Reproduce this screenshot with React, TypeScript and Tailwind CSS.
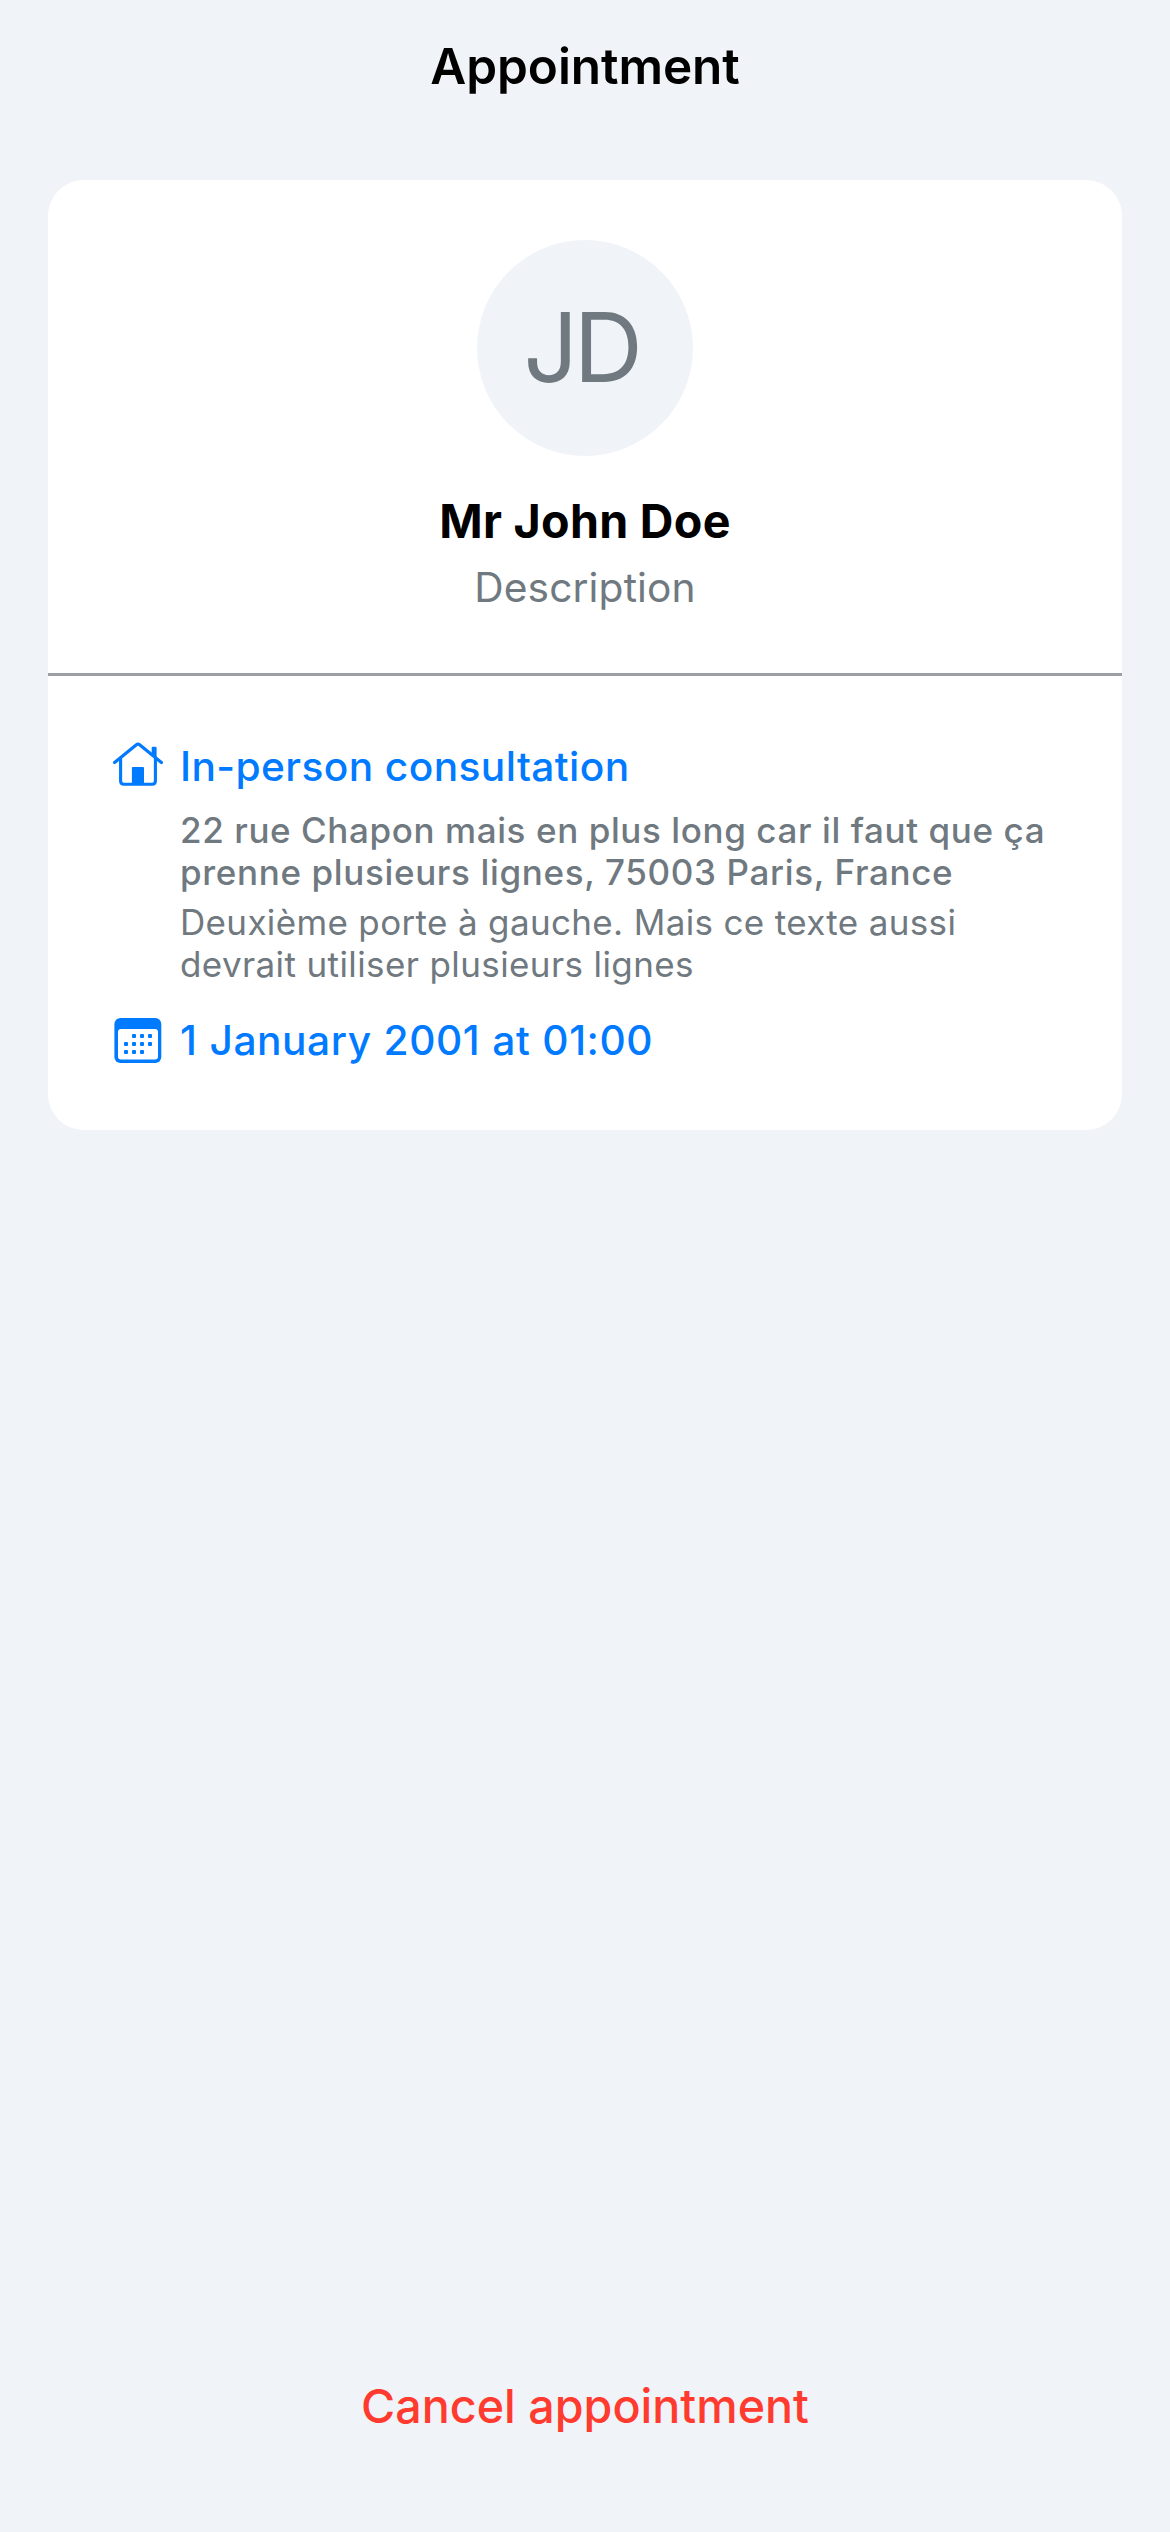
function HouseIcon() {
  return (
    <svg
      className="h-[49px] w-[74px] shrink-0"
      viewBox="6 22 74 49"
      fill="none"
      stroke="#007AFF"
      strokeLinecap="round"
      strokeLinejoin="round"
      aria-hidden="true"
    >
      <path d="M14.6 42.5 L36.4 24.7 Q38 23.5 39.6 24.7 L61.4 42.5" strokeWidth="3.2" />
      <path d="M20.6 38.5 V61 Q20.6 64.2 23.8 64.2 H52.2 Q55.4 64.2 55.4 61 V38.5" strokeWidth="3.1" />
      <path
        d="M51.7 35 V27.9 Q51.7 26.7 52.9 26.7 H55.4 Q56.6 26.7 56.6 27.9 V39 Z"
        fill="#007AFF"
        stroke="none"
      />
      <path d="M31.9 64 V48 Q31.9 47.1 32.8 47.1 H43.1 Q44 47.1 44 48 V64 Z" fill="#007AFF" stroke="none" />
    </svg>
  );
}

const calendarDots: [number, number][] = [
  [34, 36],
  [42, 36],
  [50, 36],
  [26, 44],
  [34, 44],
  [42, 44],
  [50, 44],
  [26, 52],
  [34, 52],
  [42, 52],
];

function CalendarIcon() {
  return (
    <svg className="h-[49px] w-[74px] shrink-0" viewBox="6 16 74 49" fill="#007AFF" aria-hidden="true">
      <rect x="14.4" y="17.9" width="46.9" height="45" rx="6" />
      <rect x="18" y="29" width="40" height="30.4" rx="3" fill="#fff" />
      {calendarDots.map(([x, y]) => (
        <rect key={`${x}-${y}`} x={x - 2} y={y - 2} width="4" height="4" rx="1" />
      ))}
    </svg>
  );
}

export default function App() {
  return (
    <div className="flex h-[2532px] w-[1170px] flex-col bg-[#F0F4F9] font-['Inter',sans-serif] text-black">
      <header className="pt-[36px] text-center">
        <h1 className="text-[49.5px] leading-[60px] font-semibold tracking-[-0.08px]">Appointment</h1>
      </header>

      <main className="mx-[48px] mt-[84px] h-[950px] rounded-[36px] bg-white">
        <section className="flex flex-col items-center border-b-[3px] border-[#9C9FA3] pt-[60px] pb-[61px]">
          <div className="flex size-[216px] items-center justify-center rounded-full bg-[#F0F4F9] pr-[8px] pb-[2px]">
            <span className="text-[95.7px] leading-[116px] tracking-[-4.3px] text-[#6F797F]">JD</span>
          </div>
          <h2 className="mt-[37px] text-[46.6px] leading-[56px] font-bold tracking-[0.28px]">Mr John Doe</h2>
          <p className="mt-[14px] text-[40.7px] leading-[49px] tracking-[0.12px] text-[#6F797F]">Description</p>
        </section>

        <section className="flex flex-col pt-[66px] pl-[58px]">
          <div className="flex text-[#007AFF]">
            <HouseIcon />
            <p className="text-[40.7px] leading-[49px] font-medium tracking-[0.387px]">In-person consultation</p>
          </div>
          <div className="mt-[18px] pl-[74px] text-[35px] leading-[42px] whitespace-nowrap text-[#6F797F]">
            <p className="font-medium">
              <span className="block tracking-[0.595px]">22 rue Chapon mais en plus long car il faut que ça</span>
              <span className="block tracking-[0.643px]">prenne plusieurs lignes, 75003 Paris, France</span>
            </p>
            <p className="mt-[8px]">
              <span className="block tracking-[0.345px]">Deuxième porte à gauche. Mais ce texte aussi</span>
              <span className="block tracking-[0.389px]">devrait utiliser plusieurs lignes</span>
            </p>
          </div>
          <div className="mt-[31px] flex text-[#007AFF]">
            <CalendarIcon />
            <p className="text-[40.7px] leading-[49px] font-medium tracking-[0.55px] [word-spacing:0.6px]">
              1 January 2001 at 01:00
            </p>
          </div>
        </section>
      </main>

      <footer className="mt-auto flex justify-center pb-[98px]">
        <button className="text-[46.6px] leading-[56px] font-medium tracking-[0.02px] text-[#FF3B30]">
          Cancel appointment
        </button>
      </footer>
    </div>
  );
}
